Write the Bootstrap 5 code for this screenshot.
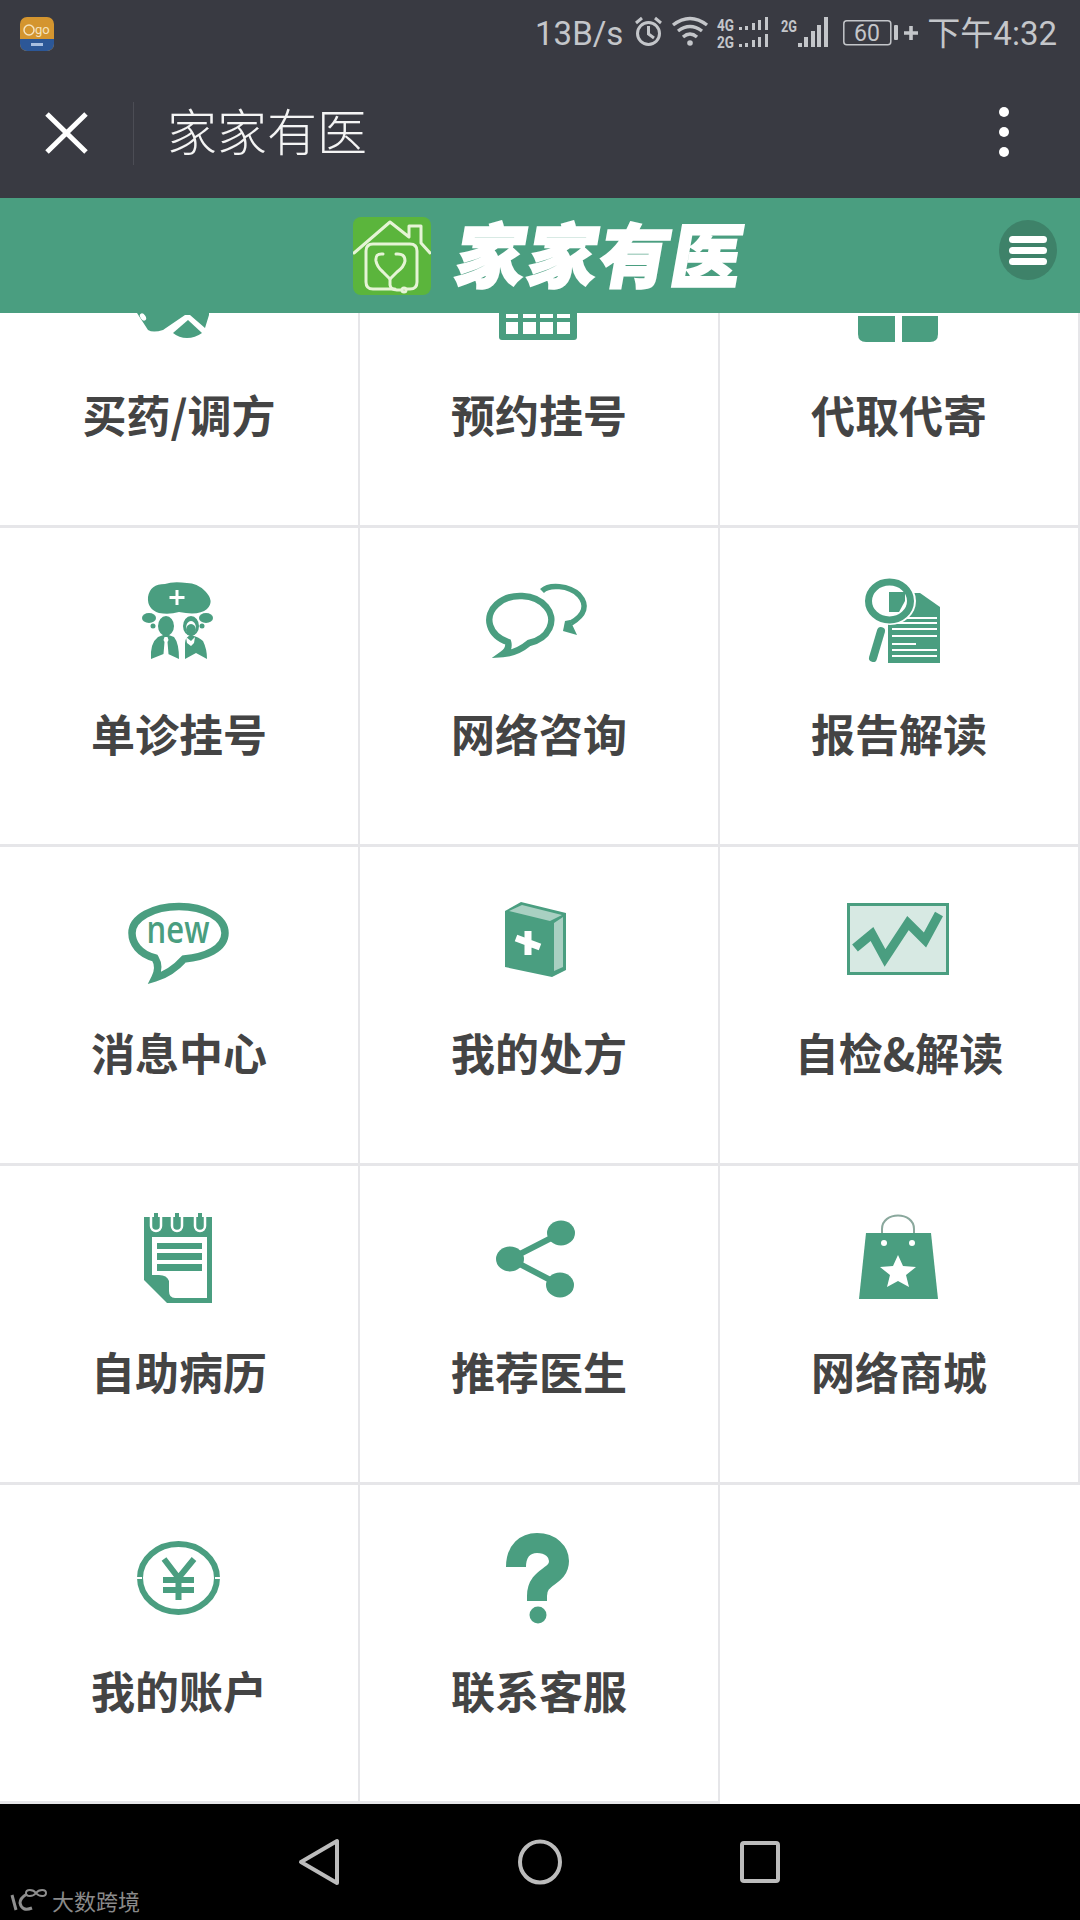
<!DOCTYPE html>
<html lang="zh-CN">
<head>
    <meta charset="UTF-8">
    <title>家家有医</title>
    <link href="https://cdn.jsdelivr.net/npm/bootstrap@5.3.0/dist/css/bootstrap.min.css" rel="stylesheet">
    <style>
        html, body { width: 1080px; height: 1920px; overflow: hidden; background: #fff; }
        body { font-family: "Noto Sans CJK SC", "Noto Sans", sans-serif; }

        /* phone chrome */
        .status-bar { height: 68px; background: #393a42; color: #c4c6ca; padding: 0 23px 0 20px; font-family: Roboto, "Noto Sans CJK SC", sans-serif; }
        .status-speed { font-size: 33px; margin-left: auto; margin-right: 11px; }
        .status-time { font-size: 33px; margin-left: 9px; }
        .title-bar { height: 130px; background: #393a42; color: #f4f4f4; }
        .close-btn { margin-left: 45px; }
        .title-sep { width: 1px; height: 63px; background: #4c4d55; margin-left: 45px; margin-right: 33px; }
        .title-text { font-size: 50px; font-weight: 300; line-height: 1; margin-bottom: 9px; }
        .more-btn { margin-left: auto; margin-right: 70px; margin-bottom: 2px; }

        /* site header */
        .site-head { height: 115px; background: #4a9e80; }
        .site-logo { margin-left: 353px; }
        .site-name { color: #fff; font-size: 70px; font-weight: 900; line-height: 1; letter-spacing: 2px; margin-left: 26px; margin-bottom: 8px; transform: skewX(-10deg); -webkit-text-stroke: 2px #fff; }
        .menu-btn { width: 58px; height: 60px; border-radius: 50%; background: #3e8269; margin-left: auto; margin-right: 23px; margin-bottom: 11px; gap: 4px; }
        .menu-btn span { display: block; width: 38px; height: 7px; border-radius: 4px; background: #fff; }

        /* menu grid */
        .grid-view { height: 1491px; overflow: hidden; }
        .grid-inner { margin-top: -104px; }
        .tile { height: 319px; border-right: 2px solid #e6e6e9; border-bottom: 3px solid #e6e6e9; padding-top: 43px; }
        .tile-blank { border: 0; }
        .tile svg { display: block; fill: #4a9e80; }
        .tile-label { font-size: 44px; font-weight: 700; line-height: 60px; color: #444; margin-top: 32px; white-space: nowrap; }
        .ln { fill: none; stroke: #4a9e80; }
        .wt { fill: #fff; }
        .wl { fill: none; stroke: #fff; }

        /* android nav */
        .nav-strip { height: 116px; background: #000; gap: 176px; }
        .nav-strip > svg { fill: none; stroke: #bcbcbc; stroke-width: 4; stroke-linejoin: round; }
        .mark-water { left: 10px; top: 84px; color: #8a8a8a; font-size: 22px; line-height: 1; gap: 4px; }
        .mark-water svg { fill: none; stroke: #8f8f8f; stroke-width: 3; }
    </style>
</head>
<body>
    <!-- Status bar -->
    <div class="status-bar d-flex align-items-center">
        <svg width="34" height="34" viewBox="0 0 34 34">
            <rect width="34" height="34" rx="7" fill="#d4952f"/>
            <path d="M0 22H34V27a7 7 0 0 1-7 7H7a7 7 0 0 1-7-7Z" fill="#2c5797"/>
            <circle cx="9" cy="13" r="5" fill="none" stroke="#f5e3bd" stroke-width="1.5"/>
            <text x="15" y="17" font-size="13" font-family="Roboto" fill="#f5e3bd">go</text>
            <rect x="11" y="26" width="12" height="3" fill="#a9bfe0"/>
        </svg>
        <span class="status-speed">13B/s</span>
        <svg width="284" height="36" viewBox="0 0 284 36" fill="#c4c6ca" font-family="Roboto">
            <circle cx="14.5" cy="17.5" r="11" fill="none" stroke="#c4c6ca" stroke-width="3"/>
            <path d="M14.5 10V18L20 22M2 7L8 2M21 2L27 7" fill="none" stroke="#c4c6ca" stroke-width="3"/>
            <path d="M39 9Q56-4 73 9M44 15Q56 6 68 15M49 21Q56 15 63 21" fill="none" stroke="#c4c6ca" stroke-width="3.4"/>
            <circle cx="56" cy="27" r="2.8"/>
            <text x="83" y="14.500" font-size="17" font-weight="700" textLength="17" lengthAdjust="spacingAndGlyphs">4G</text>
            <text x="83" y="31.500" font-size="17" font-weight="700" textLength="17" lengthAdjust="spacingAndGlyphs">2G</text>
            <path d="M105 11h3v3h-3ZM111 10h3v4h-3ZM118 7h3v7h-3ZM124 4h3v10h-3ZM131 1h3v13h-3Z"/>
            <path d="M105 28h3v3h-3ZM111 27h3v4h-3ZM118 24h3v7h-3ZM124 21h3v10h-3ZM131 18h3v13h-3Z"/>
            <text x="147" y="15.500" font-size="17" font-weight="700" textLength="16" lengthAdjust="spacingAndGlyphs">2G</text>
            <path d="M164 27h4v4h-4ZM170 21h4v10h-4ZM177 15h4v16h-4ZM183 9h4v22h-4ZM190 1h4v30h-4Z"/>
            <rect x="209.8" y="4.8" width="47" height="24" rx="3" fill="none" stroke="#c4c6ca" stroke-width="1.5"/>
            <text x="233" y="25" font-size="23" text-anchor="middle">60</text>
            <rect x="260" y="9" width="4" height="15" rx="1"/>
            <path d="M270 15.2h5.2V10h3.6v5.2H284v3.6h-5.2V24h-3.6v-5.2H270Z"/>
        </svg>
        <span class="status-time">下午4:32</span>
    </div>

    <!-- Browser title -->
    <div class="title-bar d-flex align-items-center">
        <svg class="close-btn" width="43" height="42" viewBox="0 0 43 42"><path d="M2 2L41 40M41 2L2 40" fill="none" stroke="#fff" stroke-width="5"/></svg>
        <div class="title-sep"></div>
        <div class="title-text">家家有医</div>
        <svg class="more-btn" width="12" height="52" viewBox="0 0 12 52" fill="#fff">
            <circle cx="6" cy="6" r="5"/><circle cx="6" cy="26" r="5"/><circle cx="6" cy="46" r="5"/>
        </svg>
    </div>

    <!-- Site header -->
    <div class="site-head d-flex align-items-center">
        <svg class="site-logo" width="78" height="78" viewBox="0 0 78 78">
            <rect width="78" height="78" rx="8" fill="#5bb53c"/>
            <g fill="none" stroke="#e6f4d6" stroke-width="3" stroke-linejoin="round" stroke-linecap="round">
                <path d="M1 36L37 5L56 20V9H68V26L77 36"/>
                <path d="M42 72H20Q13 72 13 65V34Q13 27 20 27H57Q64 27 64 34V65Q64 72 57 72H53"/>
                <path d="M30 37Q22 36 23 44Q24 50 30 55L37 62V68Q38 73 44 73H49"/>
                <path d="M43 37Q52 36 52 44Q51 50 44 55L37 62"/>
                <circle cx="51" cy="73" r="2"/>
            </g>
        </svg>
        <div class="site-name">家家有医</div>
        <div class="menu-btn d-flex flex-column align-items-center justify-content-center">
            <span></span><span></span><span></span>
        </div>
    </div>

    <!-- Menu grid -->
    <div class="grid-view">
        <div class="grid-inner row g-0">
            <div class="col-4 tile d-flex flex-column align-items-center">
                <svg width="120" height="100" viewBox="0 0 120 100">
                    <path d="M16 40H90V63L86 76L71 63H66L44 78Q34 81 29 78L18 61Z"/>
                    <path d="M54 81L69 68L83 81Q76 86 68 86Q60 86 54 81Z"/>
                    <ellipse class="wt" cx="24" cy="65" rx="2.500" ry="4" transform="rotate(-35 24 65)"/>
                </svg>
                <div class="tile-label">买药/调方</div>
            </div>
            <div class="col-4 tile d-flex flex-column align-items-center">
                <svg width="120" height="100" viewBox="0 0 120 100">
                    <rect x="20" y="40" width="78" height="48" rx="3"/>
                    <path class="wt" d="M27 62h12v4H27ZM44 62h13v4H44ZM61 62h13v4H61ZM78 62h13v4H78ZM27 70h12v12H27ZM44 70h13v12H44ZM61 70h13v12H61ZM78 70h13v12H78Z"/>
                </svg>
                <div class="tile-label">预约挂号</div>
            </div>
            <div class="col-4 tile d-flex flex-column align-items-center">
                <svg width="120" height="100" viewBox="0 0 120 100">
                    <path d="M19 64H56V90H27Q19 90 19 82Z"/>
                    <path d="M63 64H99V82Q99 90 91 90H63Z"/>
                </svg>
                <div class="tile-label">代取代寄</div>
            </div>

            <div class="col-4 tile d-flex flex-column align-items-center">
                <svg width="120" height="100" viewBox="0 0 120 100">
                    <path d="M40 42Q28 38 29 26Q31 13 46 13Q54 10 68 12Q78 12 86 20Q96 30 88 38Q80 45 60 41Q50 44 40 42Z"/>
                    <path class="wt" d="M56.500 19h3v6h6v3h-6v6h-3v-6h-6v-3h6Z"/>
                    <ellipse cx="30" cy="47" rx="7" ry="5"/><ellipse cx="87" cy="47" rx="7" ry="5"/>
                    <circle cx="34" cy="55" r="2.500"/><circle cx="83" cy="55" r="2.500"/>
                    <ellipse cx="47" cy="55" rx="8" ry="10"/><ellipse cx="72" cy="55" rx="8" ry="10"/>
                    <ellipse class="wt" cx="72" cy="57" rx="5" ry="7"/><ellipse cx="72" cy="59" rx="5" ry="6"/>
                    <path d="M39 66L47 63L55 66Q60 72 60 88L47 82L32 88Q31 72 39 66Z"/>
                    <path d="M66 88V72Q66 66 72 64Q80 66 84 70Q88 78 88 88L77 82Z"/>
                    <path class="wt" d="M45.500 66h3l1 3-1 2 1 12-2.500 2-2.500-2 1-12-1-2ZM67 66l5 4 4-4-1 6-3 3-4-3Z"/>
                </svg>
                <div class="tile-label">单诊挂号</div>
            </div>
            <div class="col-4 tile d-flex flex-column align-items-center">
                <svg width="120" height="100" viewBox="0 0 120 100">
                    <path class="ln" stroke-width="6.500" d="M29 71A31 24 0 1 1 50 72Q38 82 24 83Q31 78 29 71Z"/>
                    <path class="ln" stroke-width="5.500" d="M63 20C70 13 90 14 100 24C109 34 106 44 92 52"/>
                    <path d="M86 50L91 49L98 64L84 60Z"/>
                </svg>
                <div class="tile-label">网络咨询</div>
            </div>
            <div class="col-4 tile d-flex flex-column align-items-center">
                <svg width="120" height="100" viewBox="0 0 120 100">
                    <path d="M49 22H81L101 36V92H49Z"/>
                    <path class="wt" d="M53 46h45v2H53ZM53 51h45v2H53ZM53 57h45v2H53ZM53 64h45v2H53ZM53 72h24v2H53ZM53 78h45v2H53ZM53 84h45v2H53Z"/>
                    <ellipse cx="51" cy="30" rx="26" ry="24" class="wt"/>
                    <ellipse cx="50.500" cy="30" rx="21" ry="19" class="ln" stroke-width="7"/>
                    <path d="M50 21H66V30L60 41H50Z"/>
                    <path class="ln" stroke-width="8" stroke-linecap="round" d="M42 60L34 87"/>
                </svg>
                <div class="tile-label">报告解读</div>
            </div>

            <div class="col-4 tile d-flex flex-column align-items-center">
                <svg width="120" height="100" viewBox="0 0 120 100">
                    <path class="ln" stroke-width="7.500" d="M36 68C20 64 13 53 13 43C13 28 34 16.500 60 16.500C86 16.500 106 28 106 43C106 59 86 67 65 69C56 79 46 85 36 88C40 80 39 73 36 68Z"/>
                    <text x="59" y="0" transform="translate(0 53) scale(1 1.2)" text-anchor="middle" font-family="Open Sans" font-size="31" font-weight="600" fill="#4a9e80">new</text>
                </svg>
                <div class="tile-label">消息中心</div>
            </div>
            <div class="col-4 tile d-flex flex-column align-items-center">
                <svg width="120" height="100" viewBox="0 0 120 100">
                    <path d="M26 21L42 12L87 23V80L73 87L26 77Z"/>
                    <path fill="#a9d0c2" d="M30 21L43 15L83 25L71 31ZM75 33L84 27V77L75 81Z"/>
                    <path class="wl" stroke-width="7" d="M49 41V65M37 48L61 57"/>
                </svg>
                <div class="tile-label">我的处方</div>
            </div>
            <div class="col-4 tile d-flex flex-column align-items-center">
                <svg width="120" height="100" viewBox="0 0 120 100">
                    <rect x="9.500" y="14.500" width="99" height="69" fill="#d7e9e3" stroke="#4a9e80" stroke-width="3"/>
                    <path class="ln" stroke-width="9" d="M16 58L33 44L46 68L69 33L86 50L100 24"/>
                </svg>
                <div class="tile-label">自检&amp;解读</div>
            </div>

            <div class="col-4 tile d-flex flex-column align-items-center">
                <svg width="120" height="100" viewBox="0 0 120 100">
                    <path d="M25 8H93V94H48L25 71Z"/>
                    <path class="wt" d="M33 28H88V89H56Q50 89 50 82V72Q48 66 40 66H33Z"/>
                    <path d="M38 34h45v6H38ZM38 44h45v7H38ZM38 55h45v7H38Z"/>
                    <path d="M35 4h4v10h-4ZM56 4h4v10h-4ZM79 4h4v10h-4Z"/>
                    <path class="wl" stroke-width="2.500" d="M32 6V17A5 5 0 0 0 42 17V6M53 6V17A5 5 0 0 0 63 17V6M76 6V17A5 5 0 0 0 86 17V6"/>
                </svg>
                <div class="tile-label">自助病历</div>
            </div>
            <div class="col-4 tile d-flex flex-column align-items-center">
                <svg width="120" height="100" viewBox="0 0 120 100">
                    <path class="ln" stroke-width="6" d="M82 24L31 50L81 76"/>
                    <ellipse cx="82" cy="24" rx="14" ry="12.500"/>
                    <ellipse cx="31" cy="50" rx="14" ry="12.500"/>
                    <ellipse cx="81" cy="76" rx="14" ry="12.500"/>
                </svg>
                <div class="tile-label">推荐医生</div>
            </div>
            <div class="col-4 tile d-flex flex-column align-items-center">
                <svg width="120" height="100" viewBox="0 0 120 100">
                    <path d="M43 30V20C43 2 75 2 75 20V30" fill="none" stroke="#8aa89d" stroke-width="2"/>
                    <path d="M27 24H92L99 90H20Z"/>
                    <circle class="wt" cx="45" cy="34" r="3"/><circle class="wt" cx="73" cy="34" r="3"/>
                    <path class="wt" d="M59 46L64 57L77 58L67 66L70 78L59 72L48 78L51 66L41 58L54 57Z"/>
                </svg>
                <div class="tile-label">网络商城</div>
            </div>

            <div class="col-4 tile d-flex flex-column align-items-center">
                <svg width="120" height="100" viewBox="0 0 120 100">
                    <ellipse class="ln" stroke-width="6" cx="59.500" cy="50" rx="38.500" ry="34"/>
                    <path class="wt" d="M15 49h8v2h-8ZM96 49h8v2h-8Z"/>
                    <path class="ln" stroke-width="6" d="M45 31L59.500 50L75 31M59.500 50V72M44 52H75M44 62H75"/>
                </svg>
                <div class="tile-label">我的账户</div>
            </div>
            <div class="col-4 tile d-flex flex-column align-items-center">
                <svg width="120" height="100" viewBox="0 0 120 100">
                    <path class="ln" stroke-width="20" d="M37 39C37 22 47 15 58 15C72 15 80 24 80 33C80 50 58 47 58 68V73"/>
                    <circle cx="59" cy="87" r="8.500"/>
                </svg>
                <div class="tile-label">联系客服</div>
            </div>
            <div class="col-4 tile tile-blank"></div>
        </div>
    </div>

    <!-- Android nav -->
    <div class="nav-strip d-flex align-items-center justify-content-center position-relative">
        <svg width="44" height="48" viewBox="0 0 44 48"><path d="M39 3V45L3 24Z"/></svg>
        <svg width="44" height="48" viewBox="0 0 44 48"><ellipse cx="22" cy="24" rx="20" ry="20.500"/></svg>
        <svg width="44" height="48" viewBox="0 0 44 48"><rect x="4" y="5" width="36" height="38" rx="2"/></svg>
        <div class="mark-water position-absolute d-flex align-items-center">
            <svg width="38" height="24" viewBox="0 0 38 24">
                <path d="M2 7L6 22M17 6Q10 10 10 15Q12 24 22 20"/>
                <path stroke-width="2" d="M26 5C23 1 16 1 16 5C16 9 23 9 26 5C29 1 36 1 36 5C36 9 29 9 26 5Z"/>
            </svg>
            <span>大数跨境</span>
        </div>
    </div>

    <script src="https://cdn.jsdelivr.net/npm/bootstrap@5.3.0/dist/js/bootstrap.bundle.min.js"></script>
</body>
</html>
